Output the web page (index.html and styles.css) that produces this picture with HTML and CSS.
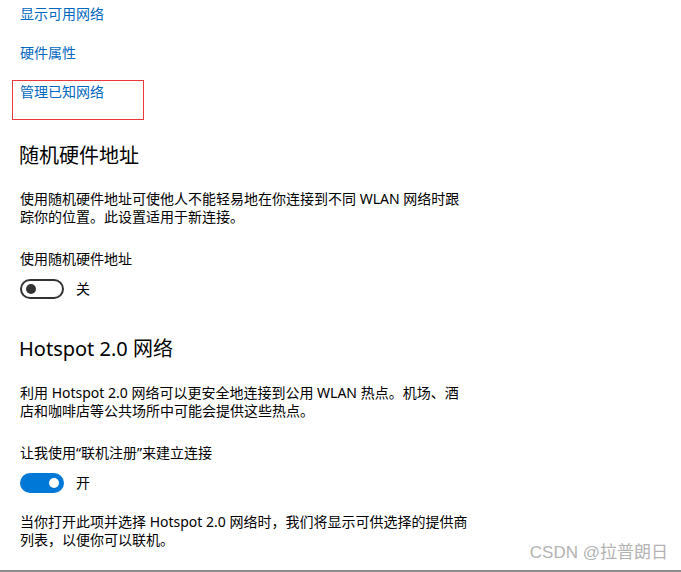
FILE: index.html
```html
<!DOCTYPE html>
<html lang="zh-CN">
<head>
<meta charset="utf-8">
<title>WLAN</title>
<link rel="stylesheet" href="styles.css">
</head>
<body>
<div class="page">
  <nav class="links">
    <a class="link" href="#">显示可用网络</a>
    <a class="link" href="#">硬件属性</a>
    <div class="mark">
      <a class="link" href="#">管理已知网络</a>
    </div>
  </nav>

  <section class="group first">
    <h2 class="title">随机硬件地址</h2>
    <p class="desc">使用随机硬件地址可使他人不能轻易地在你连接到不同 WLAN 网络时跟踪你的位置。此设置适用于新连接。</p>
    <div class="label">使用随机硬件地址</div>
    <div class="switch-row">
      <span class="switch off"><span class="knob"></span></span>
      <span class="state">关</span>
    </div>
  </section>

  <section class="group second">
    <h2 class="title">Hotspot 2.0 网络</h2>
    <p class="desc">利用 Hotspot 2.0 网络可以更安全地连接到公用 WLAN 热点。机场、酒店和咖啡店等公共场所中可能会提供这些热点。</p>
    <div class="label">让我使用“联机注册”来建立连接</div>
    <div class="switch-row">
      <span class="switch on"><span class="knob"></span></span>
      <span class="state">开</span>
    </div>
    <p class="desc note">当你打开此项并选择 Hotspot 2.0 网络时，我们将显示可供选择的提供商列表，以便你可以联机。</p>
  </section>
</div>
<div class="watermark">CSDN @拉普朗日</div>
<div class="bottom-line"></div>
</body>
</html>
```

FILE: styles.css
```css
* { box-sizing: border-box; }
html, body { margin: 0; padding: 0; }
body {
  width: 681px;
  height: 572px;
  overflow: hidden;
  position: relative;
  background: #fff;
  color: #000;
  font-family: "Noto Sans", "Noto Sans CJK SC", sans-serif;
  font-size: 14px;
}
.page { padding-top: 4px; }
.links { display: flex; flex-direction: column; }
.link {
  display: block;
  color: #0067c0;
  text-decoration: none;
  line-height: 20px;
  height: 39px;
  padding-left: 20px;
  font-size: 14px;
}
.mark {
  margin-top: -2px;
  margin-left: 12px;
  width: 132px;
  height: 40px;
  border: 1px solid #e8383b;
  padding-top: 1px;
}
.mark .link { padding-left: 7px; height: auto; }
.group { padding-left: 20px; }
.first { margin-top: 22px; }
.second { margin-top: 36px; }
.title {
  margin: 0 0 0 -1px;
  font-size: 20px;
  font-weight: 400;
  line-height: 28px;
}
.desc {
  margin: 20px 0 0 0;
  width: 450px;
  line-height: 18px;
}
.second .desc { margin-top: 21px; }
.second .note { margin-top: 20px; }
.label { margin-top: 24px; line-height: 18px; }
.switch-row {
  margin-top: 11px;
  display: flex;
  align-items: center;
  height: 20px;
}
.switch {
  width: 44px;
  height: 20px;
  border-radius: 10px;
  display: flex;
  align-items: center;
  padding: 0 4px;
}
.switch.off { border: 2px solid #333; justify-content: flex-start; }
.switch.off .knob { background: #333; }
.switch.on { background: #0078d7; justify-content: flex-end; padding: 0 5px; }
.switch.on .knob { background: #fff; }
.knob { width: 10px; height: 10px; border-radius: 50%; display: block; }
.state { margin-left: 12px; line-height: 20px; }
.watermark {
  position: absolute;
  right: 13px;
  top: 543px;
  font-family: "Liberation Sans", "Noto Sans CJK SC", sans-serif;
  font-size: 17px;
  line-height: 20px;
  color: #b3b3b3;
}
.bottom-line {
  position: absolute;
  left: 0;
  right: 0;
  top: 570px;
  height: 2px;
  background: #8c8c8c;
}
```
